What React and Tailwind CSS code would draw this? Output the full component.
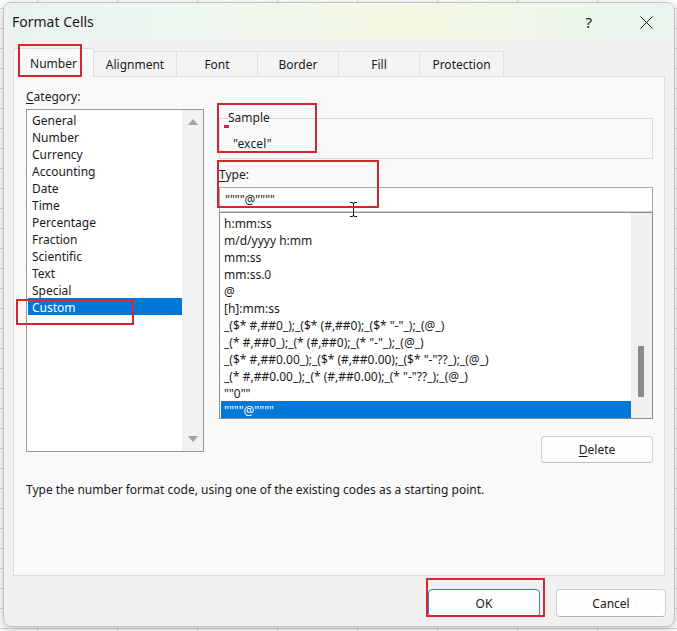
import React from 'react';

const categories = ['General', 'Number', 'Currency', 'Accounting', 'Date', 'Time', 'Percentage', 'Fraction', 'Scientific', 'Text', 'Special', 'Custom'];

const formats = [
    'h:mm:ss',
    'm/d/yyyy h:mm',
    'mm:ss',
    'mm:ss.0',
    '@',
    '[h]:mm:ss',
    '_($* #,##0_);_($* (#,##0);_($* "-"_);_(@_)',
    '_(* #,##0_);_(* (#,##0);_(* "-"_);_(@_)',
    '_($* #,##0.00_);_($* (#,##0.00);_($* "-"??_);_(@_)',
    '_(* #,##0.00_);_(* (#,##0.00);_(* "-"??_);_(@_)',
    '""0""',
    '""""@""""',
];

const tabs = [
    { label: 'Number', w: 'w-[81px]', active: true },
    { label: 'Alignment', w: 'w-[83px]' },
    { label: 'Font', w: 'w-[81px]' },
    { label: 'Border', w: 'w-[81px]' },
    { label: 'Fill', w: 'w-[81px]' },
    { label: 'Protection', w: 'w-[84px]' },
];

function Row({ text, selected }) {
    return (
        <div className={`h-[17px] pt-px leading-[17px] whitespace-nowrap ${selected ? 'bg-[#0078d7] text-white' : ''}`}>
            {text}
        </div>
    );
}

export default function App() {
    return (
        <div className="relative w-[677px] h-[631px] overflow-hidden bg-white [background-image:linear-gradient(to_right,#d6d6d6_1px,transparent_1px),linear-gradient(to_bottom,#d6d6d6_1px,transparent_1px)] [background-size:80px_20px] [background-position:37px_8px] pl-[3px] pt-[2px] font-['Noto_Sans',sans-serif] text-[12px] text-[#1a1a1a]">

            {/* dialog */}
            <div className="flex h-[625px] w-[672px] flex-col overflow-hidden rounded-[8px] border border-[#c2c2c2] bg-[#f0f0f0] shadow-[0_3px_12px_rgba(0,0,0,0.22)]">

                {/* title bar */}
                <div className="flex h-[38px] shrink-0 items-center bg-[linear-gradient(90deg,#ebf3f2_0%,#eef7ef_30%,#f4f8e3_60%,#e8f6ef_100%)] pl-[8px]">
                    <span className="text-[14px] leading-none">Format Cells</span>
                    <span className="ml-auto text-[15px] leading-none">?</span>
                    <svg className="ml-[48px] mr-[21px]" width="13" height="13" viewBox="0 0 13 13">
                        <path d="M0.5 0.5 L12.5 12.5 M12.5 0.5 L0.5 12.5" stroke="#1a1a1a" strokeWidth="1" />
                    </svg>
                </div>

                {/* tabs */}
                <div className="relative z-10 mt-[7px] -mb-px flex h-[29px] items-end pl-[9px]">
                    {tabs.map(t => (
                        t.active ? (
                            <div key={t.label} className={`${t.w} flex h-[29px] items-center justify-center rounded-t-[3px] border border-b-0 border-[#dcdcdc] bg-[#f9f9f9] pt-px`}>
                                {t.label}
                            </div>
                        ) : (
                            <div key={t.label} className={`${t.w} mb-px flex h-[25px] items-center justify-center border border-b-0 border-l-0 border-[#e0e0e0] bg-[#f3f3f3] pt-[2px]`}>
                                {t.label}
                            </div>
                        )
                    ))}
                </div>

                {/* panel */}
                <div className="ml-[9px] flex h-[500px] w-[652px] shrink-0 flex-col border border-[#dcdcdc] bg-[#f9f9f9] pl-[12px]">
                    <div className="flex gap-[15px]">

                        {/* category */}
                        <div className="w-[178px] pt-[12px]">
                            <div className="h-[16px] leading-[16px]"><u className="underline-offset-2">C</u>ategory:</div>
                            <div className="mt-[4px] flex h-[343px] border border-[#999999] bg-white">
                                <div className="ml-px flex-1 pt-px">
                                    {categories.map(c => (
                                        <div key={c} className={`h-[17px] pl-[4px] pt-px leading-[17px] ${c === 'Custom' ? 'bg-[#0078d7] text-white' : ''}`}>{c}</div>
                                    ))}
                                </div>
                                <div className="flex w-[21px] flex-col items-center justify-between bg-[#f2f2f2] py-[9px]">
                                    <svg width="10" height="6" viewBox="0 0 10 6"><path d="M5 0 L10 6 L0 6 Z" fill="#a3a3a3" /></svg>
                                    <svg width="10" height="6" viewBox="0 0 10 6"><path d="M0 0 L10 0 L5 6 Z" fill="#a3a3a3" /></svg>
                                </div>
                            </div>
                        </div>

                        {/* right side */}
                        <div className="w-[434px] pt-[33px]">
                            <fieldset className="h-[49px] border border-[#dadada] pl-[8px]">
                                <legend className="h-[16px] leading-[16px]">Sample</legend>
                                <div className="ml-[5px] mt-[10px] h-[16px] leading-[16px] tracking-[0.2px]">"excel"</div>
                            </fieldset>

                            <div className="mt-[8px] h-[16px] leading-[16px]"><u className="underline-offset-2">T</u>ype:</div>
                            <div className="mt-[4px] flex h-[25px] items-center border border-[#a8a8a8] border-b-[#d0d0d0] bg-white pl-[5px] pt-px">
                                """"@""""
                            </div>

                            <div className="flex h-[207px] border border-[#8f8f8f] bg-white">
                                <div className="ml-px w-[410px] pt-px">
                                    {formats.map((f, i) => (
                                        <Row key={i} text={<span className="pl-[3px]">{f}</span>} selected={i === formats.length - 1} />
                                    ))}
                                </div>
                                <div className="w-[21px] bg-[#f0f0f0] pl-[7px] pt-[133px]">
                                    <div className="h-[51px] w-[6px] bg-[#8a8a8a]" />
                                </div>
                            </div>

                            <div className="mt-[17px] flex justify-end">
                                <button className="h-[27px] w-[112px] rounded-[4px] border border-[#d0d0d0] border-b-[#bdbdbd] bg-[#fdfdfd] pt-px">
                                    <u className="underline-offset-2">D</u>elete
                                </button>
                            </div>
                        </div>
                    </div>

                    <p className="mt-[19px] h-[16px] leading-[16px]">Type the number format code, using one of the existing codes as a starting point.</p>
                </div>

                {/* buttons */}
                <div className="mt-[13px] flex justify-end gap-[16px] pr-[8px]">
                    <button className="h-[28px] w-[112px] rounded-[4px] border border-[#3b7fc4] bg-[#fdfdfd] pt-[2px]">OK</button>
                    <button className="h-[28px] w-[110px] rounded-[4px] border border-[#d0d0d0] border-b-[#b8b8b8] bg-[#fdfdfd] pt-[2px]">Cancel</button>
                </div>
            </div>

            {/* text cursor */}
            <svg className="absolute z-20 left-[349px] top-[202px]" width="9" height="15" viewBox="0 0 9 15">
                <path d="M1 0.5 H3 Q4.5 0.5 4.5 2 V13 Q4.5 14.5 3 14.5 H1 M8 0.5 H6 Q4.5 0.5 4.5 2 M4.5 13 Q4.5 14.5 6 14.5 H8" stroke="#111" strokeWidth="1" fill="none" />
            </svg>

            {/* red annotation boxes */}
            <div className="absolute z-20 left-[18px] top-[44px] h-[33px] w-[64px] border-2 border-[#d7262f]" />
            <div className="absolute z-20 left-[16px] top-[299px] h-[26px] w-[118px] border-2 border-[#d7262f]" />
            <div className="absolute z-20 left-[217px] top-[103px] h-[50px] w-[100px] border-2 border-[#d7262f]" />
            <div className="absolute z-20 left-[224px] top-[125px] h-[3px] w-[5px] bg-[#d7262f]" />
            <div className="absolute z-20 left-[217px] top-[160px] h-[48px] w-[162px] border-2 border-[#d7262f]" />
            <div className="absolute z-20 left-[426px] top-[578px] h-[39px] w-[119px] border-2 border-[#d7262f]" />
        </div>
    );
}
